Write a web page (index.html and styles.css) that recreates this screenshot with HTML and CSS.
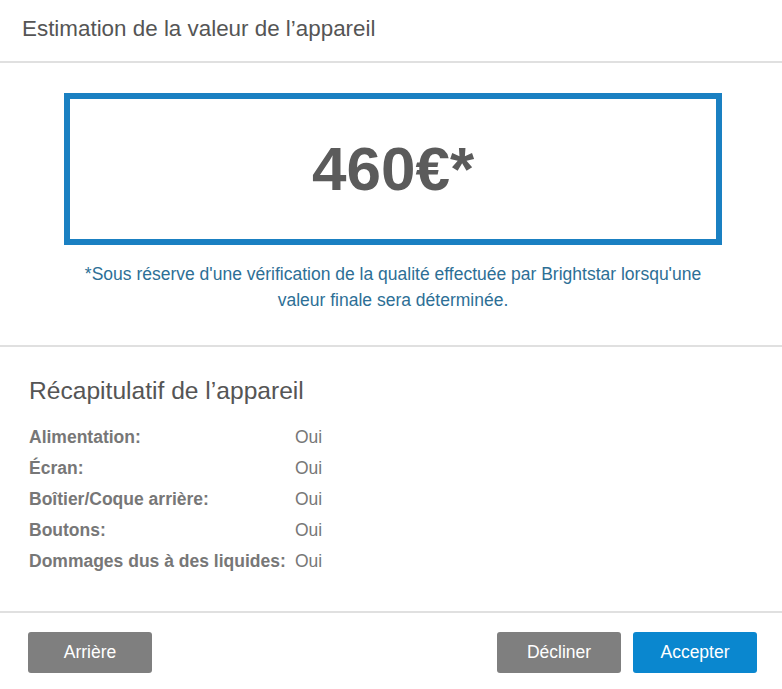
FILE: index.html
```
<!DOCTYPE html>
<html lang="fr">
<head>
<meta charset="utf-8">
<title>Estimation de la valeur de l’appareil</title>
<link rel="stylesheet" href="styles.css">
</head>
<body>
<div class="modal">
  <header class="modal-header">
    <h1 class="modal-title">Estimation de la valeur de l’appareil</h1>
  </header>
  <section class="estimate">
    <div class="price-box">
      <span class="price">460€*</span>
    </div>
    <p class="note">*Sous réserve d'une vérification de la qualité effectuée par Brightstar lorsqu'une<br>valeur finale sera déterminée.</p>
  </section>
  <section class="summary">
    <h2 class="summary-title">Récapitulatif de l’appareil</h2>
    <dl class="summary-list">
      <dt>Alimentation:</dt><dd>Oui</dd>
      <dt>Écran:</dt><dd>Oui</dd>
      <dt>Boîtier/Coque arrière:</dt><dd>Oui</dd>
      <dt>Boutons:</dt><dd>Oui</dd>
      <dt>Dommages dus à des liquides:</dt><dd>Oui</dd>
    </dl>
  </section>
  <footer class="modal-footer">
    <button class="btn btn-gray">Arrière</button>
    <div class="footer-right">
      <button class="btn btn-gray">Décliner</button>
      <button class="btn btn-blue">Accepter</button>
    </div>
  </footer>
</div>
</body>
</html>
```

FILE: styles.css
```
* {
  box-sizing: border-box;
}

html, body {
  margin: 0;
  padding: 0;
  background: #ffffff;
}

body {
  font-family: "Liberation Sans", Arial, sans-serif;
  color: #555555;
}

.modal {
  width: 782px;
  min-height: 689px;
}

.modal-header {
  padding: 16px 22px 19px;
  border-bottom: 2px solid #e0e0e0;
}

.modal-title {
  margin: 0;
  font-size: 22.4px;
  line-height: 26px;
  font-weight: normal;
  color: #555555;
}

.estimate {
  padding: 30px 60px 32px 64px;
  border-bottom: 2px solid #e0e0e0;
}

.price-box {
  height: 152px;
  border: 6px solid #1a80c2;
  display: flex;
  align-items: center;
  justify-content: center;
}

.price {
  font-size: 62px;
  font-weight: bold;
  color: #5b5b5b;
  line-height: 1;
}

.note {
  margin: 16px 0 0;
  text-align: center;
  font-size: 17.5px;
  line-height: 26px;
  color: #2d6f96;
}

.summary {
  padding: 31px 29px 34px;
  border-bottom: 2px solid #e0e0e0;
}

.summary-title {
  margin: 0 0 18px;
  font-size: 24.6px;
  line-height: 26px;
  font-weight: normal;
  color: #555555;
}

.summary-list {
  margin: 0;
  display: grid;
  grid-template-columns: 266px auto;
  font-size: 17.5px;
  line-height: 31px;
}

.summary-list dt {
  font-weight: bold;
  color: #777777;
}

.summary-list dd {
  margin: 0;
  color: #777777;
}

.modal-footer {
  padding: 19px 25px 17px 28px;
  display: flex;
  justify-content: space-between;
  align-items: center;
}

.footer-right {
  display: flex;
  gap: 12px;
}

.btn {
  width: 124px;
  height: 41px;
  border: none;
  border-radius: 3px;
  font-family: "Liberation Sans", Arial, sans-serif;
  font-size: 17.5px;
  color: #ffffff;
  padding: 0;
  cursor: pointer;
}

.btn-gray {
  background: #7f7f7f;
}

.btn-blue {
  background: #0a87cf;
}
```
